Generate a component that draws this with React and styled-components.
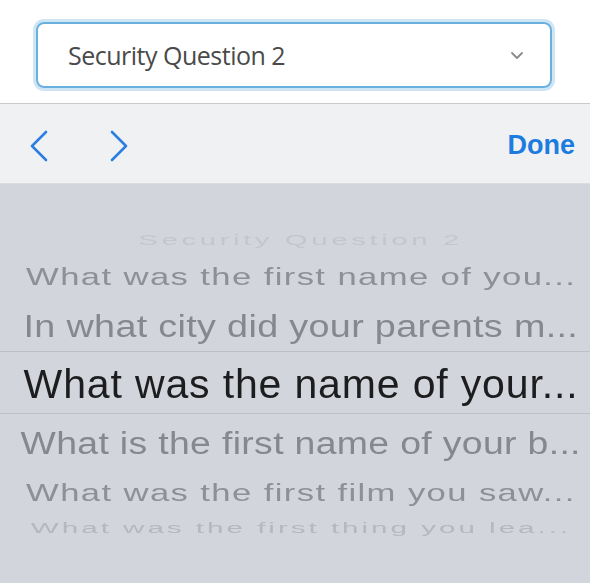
import React from "react";
import styled, { createGlobalStyle } from "styled-components";

const GlobalStyle = createGlobalStyle`
  html, body {
    margin: 0;
    padding: 0;
    background: #d2d5db;
  }
  body {
    font-family: "Liberation Sans", Arial, sans-serif;
  }
`;

const Screen = styled.div`
  width: 590px;
  height: 583px;
  display: flex;
  flex-direction: column;
  overflow: hidden;
`;

const FormArea = styled.div`
  height: 104px;
  background: #ffffff;
  padding: 22px 38px 0 36px;
  box-sizing: border-box;
  border-bottom: 1px solid #c9cace;
`;

const Select = styled.div`
  height: 66px;
  box-sizing: border-box;
  border: 2px solid #6ab0de;
  border-radius: 8px;
  box-shadow: 0 0 0 3px #cfe5f4;
  display: flex;
  align-items: center;
  justify-content: space-between;
  padding: 0 26px 0 30px;
  font-family: "Open Sans", sans-serif;
  font-size: 25px;
  letter-spacing: -0.5px;
  color: #4a4a4a;
`;

const Toolbar = styled.div`
  height: 80px;
  background: #f0f1f3;
  display: flex;
  align-items: center;
  justify-content: space-between;
  padding: 4px 15px 0 28px;
  box-sizing: border-box;
  border-bottom: 1px solid #dcdde1;
`;

const Arrows = styled.div`
  display: flex;
  gap: 58px;
  align-items: center;
`;

const Done = styled.span`
  font-weight: bold;
  font-size: 27px;
  color: #1c7ce0;
`;

const Picker = styled.div`
  flex: 1;
  background: #d2d5db;
  padding-top: 38px;
  display: flex;
  flex-direction: column;
`;

const Row = styled.div`
  height: ${(p) => p.$h}px;
  display: flex;
  align-items: center;
  justify-content: center;
  white-space: nowrap;
  color: ${(p) => p.$color};
  font-size: ${(p) => p.$size}px;
  letter-spacing: ${(p) => p.$ls || 0}px;
  padding-top: ${(p) => p.$pt || 0}px;
  padding-left: 12px;
  box-sizing: border-box;
  & > span {
    display: inline-block;
    transform: scale(${(p) => p.$sx}, ${(p) => p.$sy});
    filter: blur(${(p) => p.$blur || 0}px);
  }
`;

const Selected = styled(Row)`
  border-top: 1px solid #bdc0c6;
  border-bottom: 1px solid #bdc0c6;
`;

const Chevron = ({ dir }) => (
  <svg width="22" height="32" viewBox="0 0 22 32">
    <path
      d={dir === "left" ? "M18 2 L4 16 L18 30" : "M4 2 L18 16 L4 30"}
      fill="none"
      stroke="#2a7fe0"
      strokeWidth="2.6"
      strokeLinecap="round"
      strokeLinejoin="round"
    />
  </svg>
);

const rowsAbove = [
  { text: "Security Question 2", h: 36, size: 25, sx: 1.18, sy: 0.55, ls: 3, color: "#c3c6cc", blur: 0.6 },
  { text: "What was the first name of you...", h: 38, size: 30, sx: 1.155, sy: 0.8, ls: 1.2, color: "#8e9095", blur: 0.3 },
  { text: "In what city did your parents m...", h: 55, size: 34, sx: 1.11, sy: 0.92, ls: 0.3, color: "#86888d", pt: 6 },
];

const rowsBelow = [
  { text: "What is the first name of your b...", h: 56, size: 34, sx: 1.1, sy: 0.92, ls: 0.3, color: "#86888d", pt: 2 },
  { text: "What was the first film you saw...", h: 46, size: 30, sx: 1.155, sy: 0.8, ls: 1.2, color: "#8e9095", blur: 0.3 },
  { text: "What was the first thing you lea...", h: 24, size: 26, sx: 1.14, sy: 0.55, ls: 2.6, color: "#b5b8be", blur: 0.5 },
];

const PickerRow = ({ r }) => (
  <Row $h={r.h} $size={r.size} $sx={r.sx} $sy={r.sy} $ls={r.ls} $color={r.color} $pt={r.pt} $blur={r.blur}>
    <span>{r.text}</span>
  </Row>
);

export default function App() {
  return (
    <>
      <GlobalStyle />
      <Screen>
        <FormArea>
          <Select>
            <span>Security Question 2</span>
            <svg width="14" height="9" viewBox="0 0 14 9">
              <path d="M2 2 L7 7 L12 2" fill="none" stroke="#8a8a8a" strokeWidth="1.8" strokeLinecap="round" strokeLinejoin="round" />
            </svg>
          </Select>
        </FormArea>
        <Toolbar>
          <Arrows>
            <Chevron dir="left" />
            <Chevron dir="right" />
          </Arrows>
          <Done>Done</Done>
        </Toolbar>
        <Picker>
          {rowsAbove.map((r) => (
            <PickerRow key={r.text} r={r} />
          ))}
          <Selected $h={63} $size={41} $sx={1} $sy={1} $ls={0.85} $color="#1d1d1f" $pt={3}>
            <span>What was the name of your...</span>
          </Selected>
          {rowsBelow.map((r) => (
            <PickerRow key={r.text} r={r} />
          ))}
        </Picker>
      </Screen>
    </>
  );
}
